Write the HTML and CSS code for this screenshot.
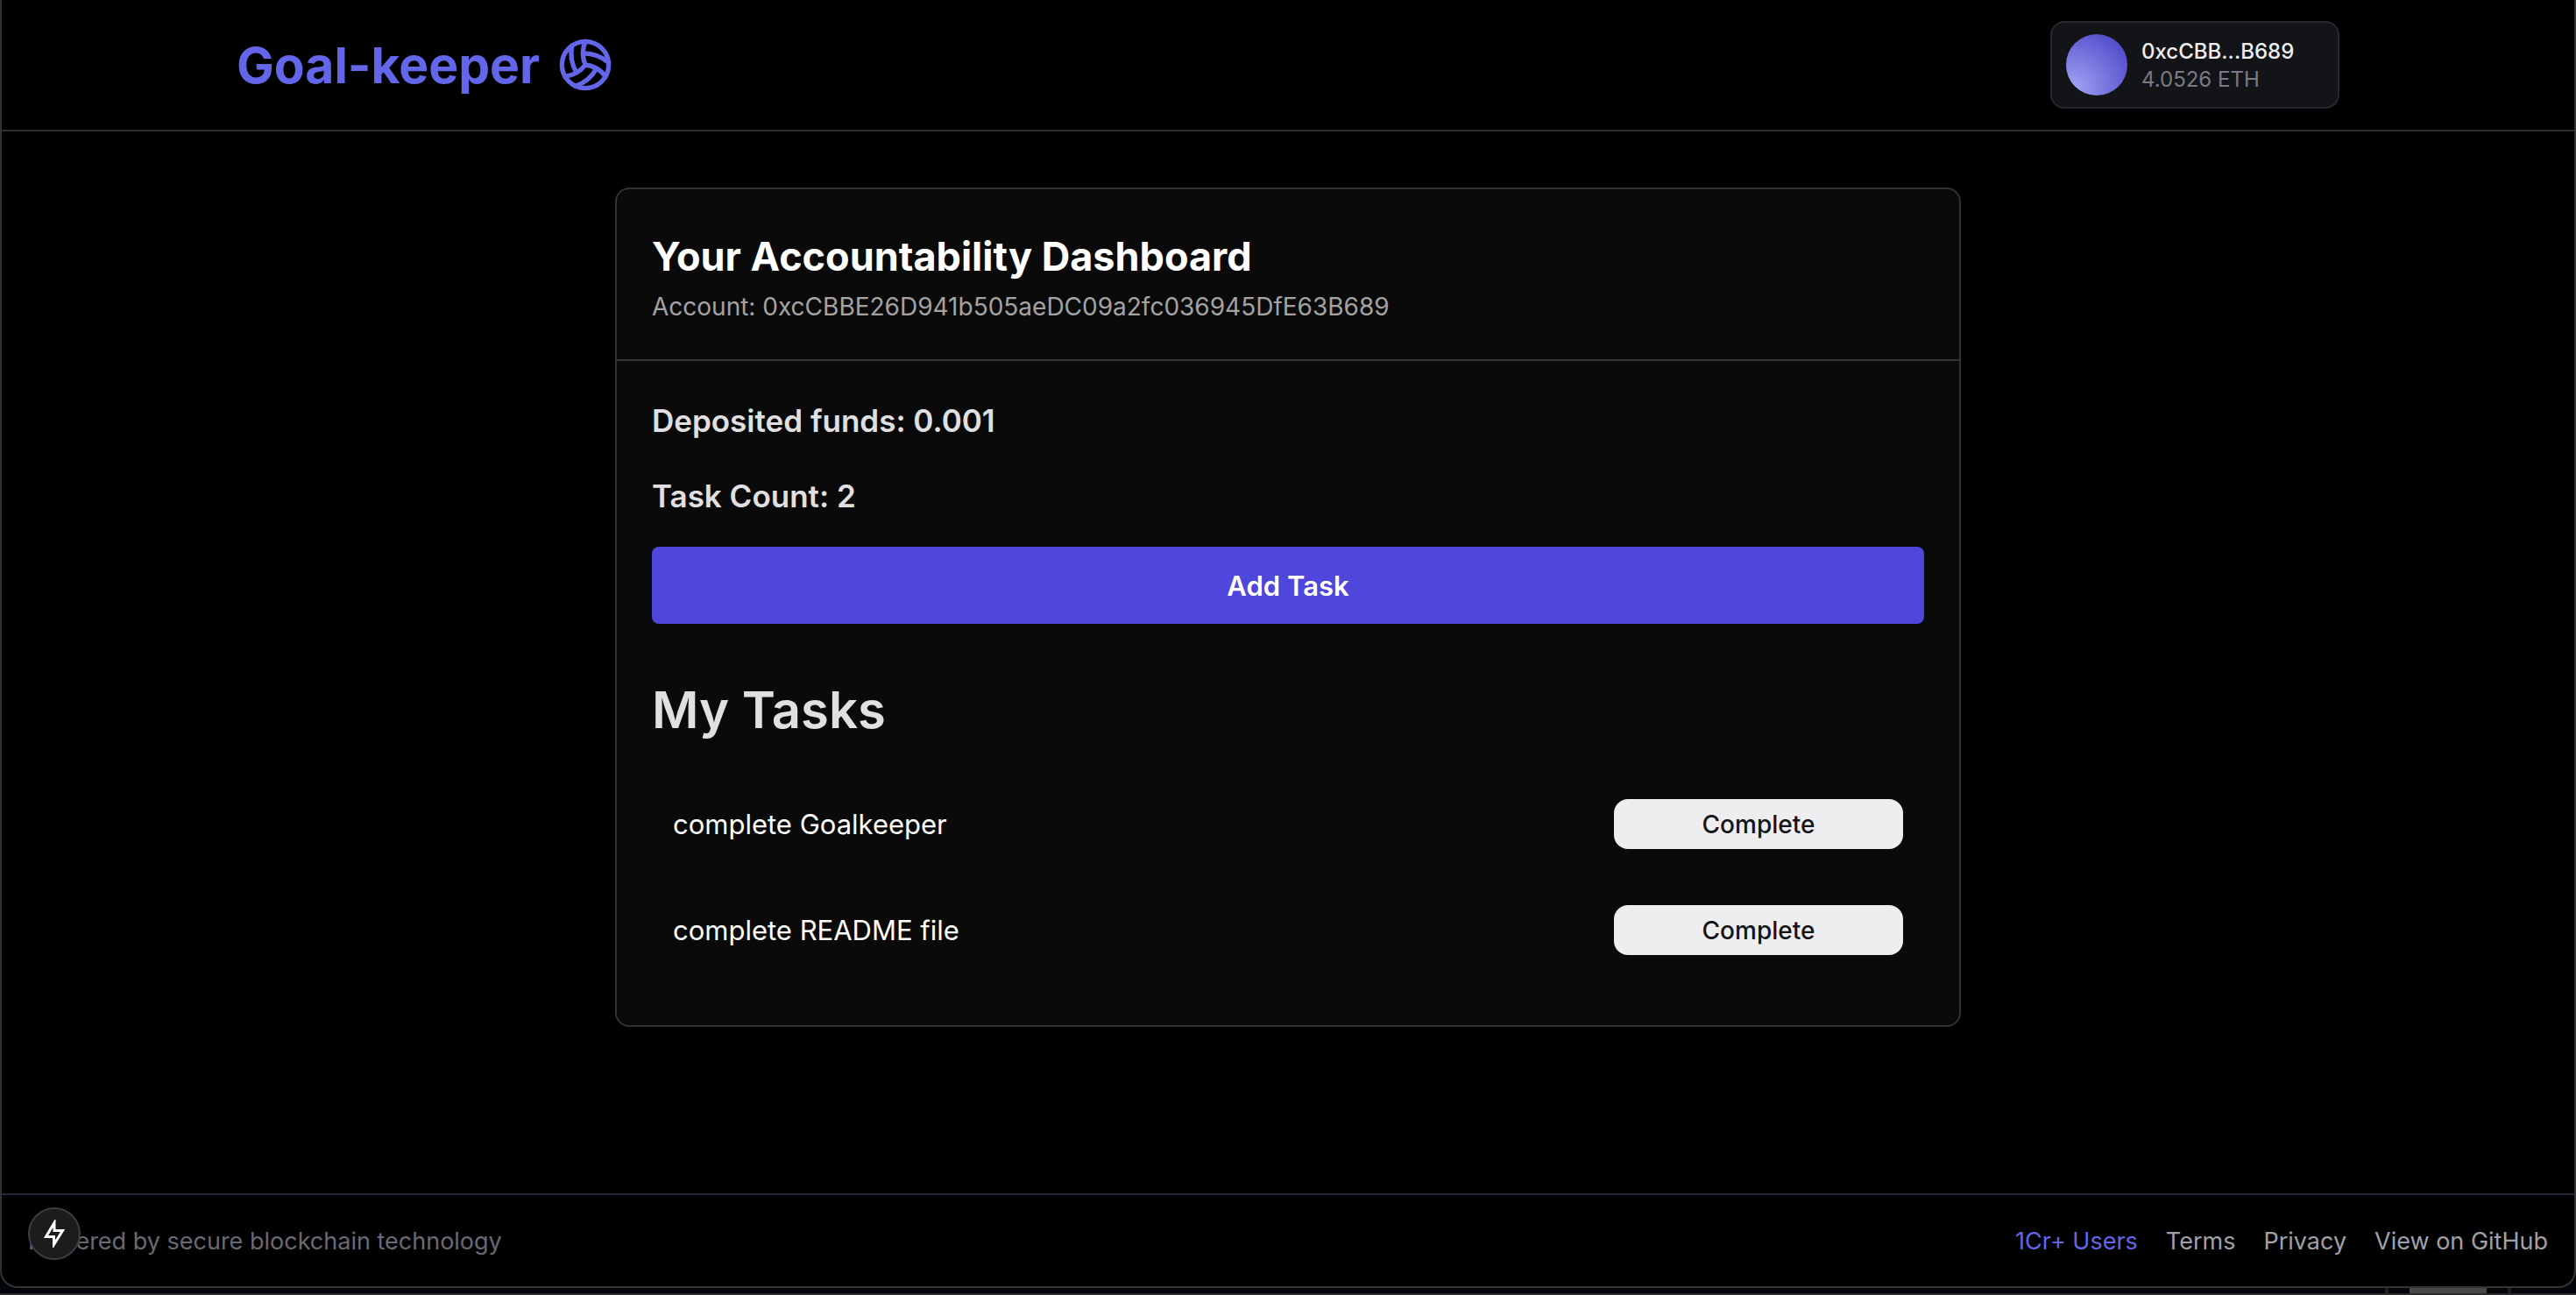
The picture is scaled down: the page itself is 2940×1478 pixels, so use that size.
FILE: index.html
```html
<!DOCTYPE html>
<html lang="en">
<head>
<meta charset="utf-8">
<title>Goal-keeper</title>
<link rel="stylesheet" href="styles.css">
</head>
<body>
<div class="window">
  <header class="site-header">
    <h1 class="brand">
      <span>Goal-keeper</span>
      <svg class="brand-icon" viewBox="0 0 24 24" aria-hidden="true">
        <path d="M11.1 7.1a16.55 16.55 0 0 1 10.9 4"/>
        <path d="M12 12a12.6 12.6 0 0 1-8.7 5"/>
        <path d="M16.8 13.6a16.55 16.55 0 0 1-9 7.5"/>
        <path d="M20.7 17a12.8 12.8 0 0 0-8.7-5 13.3 13.3 0 0 1 0-10"/>
        <path d="M6.3 3.8a16.55 16.55 0 0 0 1.9 11.5"/>
        <circle cx="12" cy="12" r="10"/>
      </svg>
    </h1>
    <button class="wallet" type="button">
      <span class="avatar"></span>
      <span class="wallet-text">
        <span class="wallet-address">0xcCBB...B689</span>
        <span class="wallet-balance">4.0526 ETH</span>
      </span>
    </button>
  </header>

  <main class="content">
    <section class="card">
      <div class="card-header">
        <h2 class="card-title">Your Accountability Dashboard</h2>
        <p class="account">Account: 0xcCBBE26D941b505aeDC09a2fc036945DfE63B689</p>
      </div>
      <div class="card-body">
        <p class="stat">Deposited funds: 0.001</p>
        <p class="stat">Task Count: 2</p>
        <button class="add-task" type="button">Add Task</button>
        <h2 class="tasks-title">My Tasks</h2>
        <ul class="tasks">
          <li class="task"><span>complete Goalkeeper</span><button class="complete" type="button">Complete</button></li>
          <li class="task"><span>complete README file</span><button class="complete" type="button">Complete</button></li>
        </ul>
      </div>
    </section>
  </main>

  <footer class="site-footer">
    <p class="powered">Powered by secure blockchain technology</p>
    <nav class="links">
      <a class="link link-accent" href="#users">1Cr+ Users</a>
      <a class="link" href="#terms">Terms</a>
      <a class="link" href="#privacy">Privacy</a>
      <a class="link" href="#github">View on GitHub</a>
    </nav>
    <button class="dev-badge" type="button" aria-label="Developer tools">
      <svg class="bolt" viewBox="0 0 24 32" aria-hidden="true">
        <path d="M12 3.5L2.5 19.5H11.5V28.5L21.5 12.5H12Z"/>
      </svg>
    </button>
  </footer>
</div>
<div class="desktop-strip">
  <span class="strip-mark"></span>
  <span class="strip-bar"></span>
  <span class="strip-mark"></span>
</div>
</body>
</html>
```
FILE: styles.css
```css
* { box-sizing: border-box; margin: 0; padding: 0; }
body {
  background: #02060b;
  color: #fff;
  font-family: Inter, "Liberation Sans", sans-serif;
  min-height: 100vh;
  display: flex;
  flex-direction: column;
}
button { font: inherit; border: 0; }
.window {
  flex: 1;
  display: flex;
  flex-direction: column;
  background: #000;
  border: 2px solid #333;
  border-top: 0;
  border-radius: 0 0 20px 20px;
}
.site-header {
  display: flex;
  align-items: center;
  justify-content: space-between;
  height: 150px;
  padding: 0 268px;
  border-bottom: 2px solid #2e2f31;
}
.brand {
  display: flex;
  align-items: center;
  gap: 20px;
  color: #6466e9;
  font-size: 57px;
  font-weight: 700;
}
.brand-icon {
  width: 64px;
  height: 64px;
  fill: none;
  stroke: currentColor;
  stroke-width: 2;
  stroke-linecap: round;
  stroke-linejoin: round;
}
.wallet {
  display: flex;
  align-items: center;
  gap: 16px;
  width: 330px;
  height: 100px;
  padding: 0 16px;
  background: #131418;
  border: 2px solid #272830;
  border-radius: 16px;
  color: #eeeef0;
  text-align: left;
}
.avatar {
  width: 70px;
  height: 70px;
  border-radius: 50%;
  background: radial-gradient(circle at 10% 90%, #a1a6f5, #4f46c8 90%);
}
.wallet-text { display: flex; flex-direction: column; padding-top: 2px; }
.wallet-address { font-size: 24px; line-height: 32px; font-weight: 500; }
.wallet-balance { font-size: 24px; line-height: 32px; color: #7c7a85; }
.content { flex: 1; padding: 64px 24px; }
.card {
  max-width: 1536px;
  margin: 0 auto;
  background: #0a0a0a;
  border: 2px solid #333;
  border-radius: 16px;
}
.card-header {
  display: flex;
  flex-direction: column;
  gap: 8px;
  padding: 48px 40px 40px;
  border-bottom: 2px solid #333;
}
.card-title { font-size: 45px; line-height: 58px; font-weight: 700; }
.account { font-size: 28px; line-height: 40px; color: #a3a3a3; }
.card-body { padding: 40px 40px 48px; }
.stat { font-size: 35px; line-height: 56px; font-weight: 600; color: #e0e0e0; margin-bottom: 30px; }
.add-task {
  display: block;
  width: 100%;
  height: 88px;
  background: #4f46dc;
  border-radius: 8px;
  color: #fff;
  font-size: 31px;
  font-weight: 600;
}
.tasks-title { margin: 58px 0 30px; font-size: 58px; line-height: 80px; font-weight: 600; color: #e0e0e0; }
.tasks { list-style: none; }
.task {
  display: flex;
  align-items: center;
  justify-content: space-between;
  height: 121px;
  padding: 0 24px;
  font-size: 31px;
}
.complete {
  width: 330px;
  height: 57px;
  border-radius: 16px;
  background: #eeeef0;
  color: #131418;
  font-size: 28px;
  font-weight: 500;
}
.site-footer {
  position: relative;
  display: flex;
  align-items: center;
  justify-content: space-between;
  height: 106px;
  padding: 0 30px;
  border-top: 2px solid #1f2937;
  font-size: 27px;
}
.powered { color: #6b6973; }
.links { display: flex; gap: 32px; }
.link { color: #a1a0a8; text-decoration: none; }
.link-accent { color: #6466e9; }
.dev-badge {
  position: absolute;
  left: 30px;
  top: 14px;
  display: flex;
  align-items: center;
  justify-content: center;
  width: 60px;
  height: 60px;
  border-radius: 50%;
  border: 2px solid #3d3d3f;
  background: #1c1c1e;
}
.bolt { width: 24px; height: 32px; fill: none; stroke: #fff; stroke-width: 3; }
.desktop-strip {
  display: flex;
  justify-content: flex-end;
  gap: 24px;
  height: 8px;
  padding-right: 74px;
  border-bottom: 2px solid #2a2a2a;
}
.strip-mark { width: 4px; background: #1c1e20; }
.strip-bar { width: 88px; background: #484848; }
```
